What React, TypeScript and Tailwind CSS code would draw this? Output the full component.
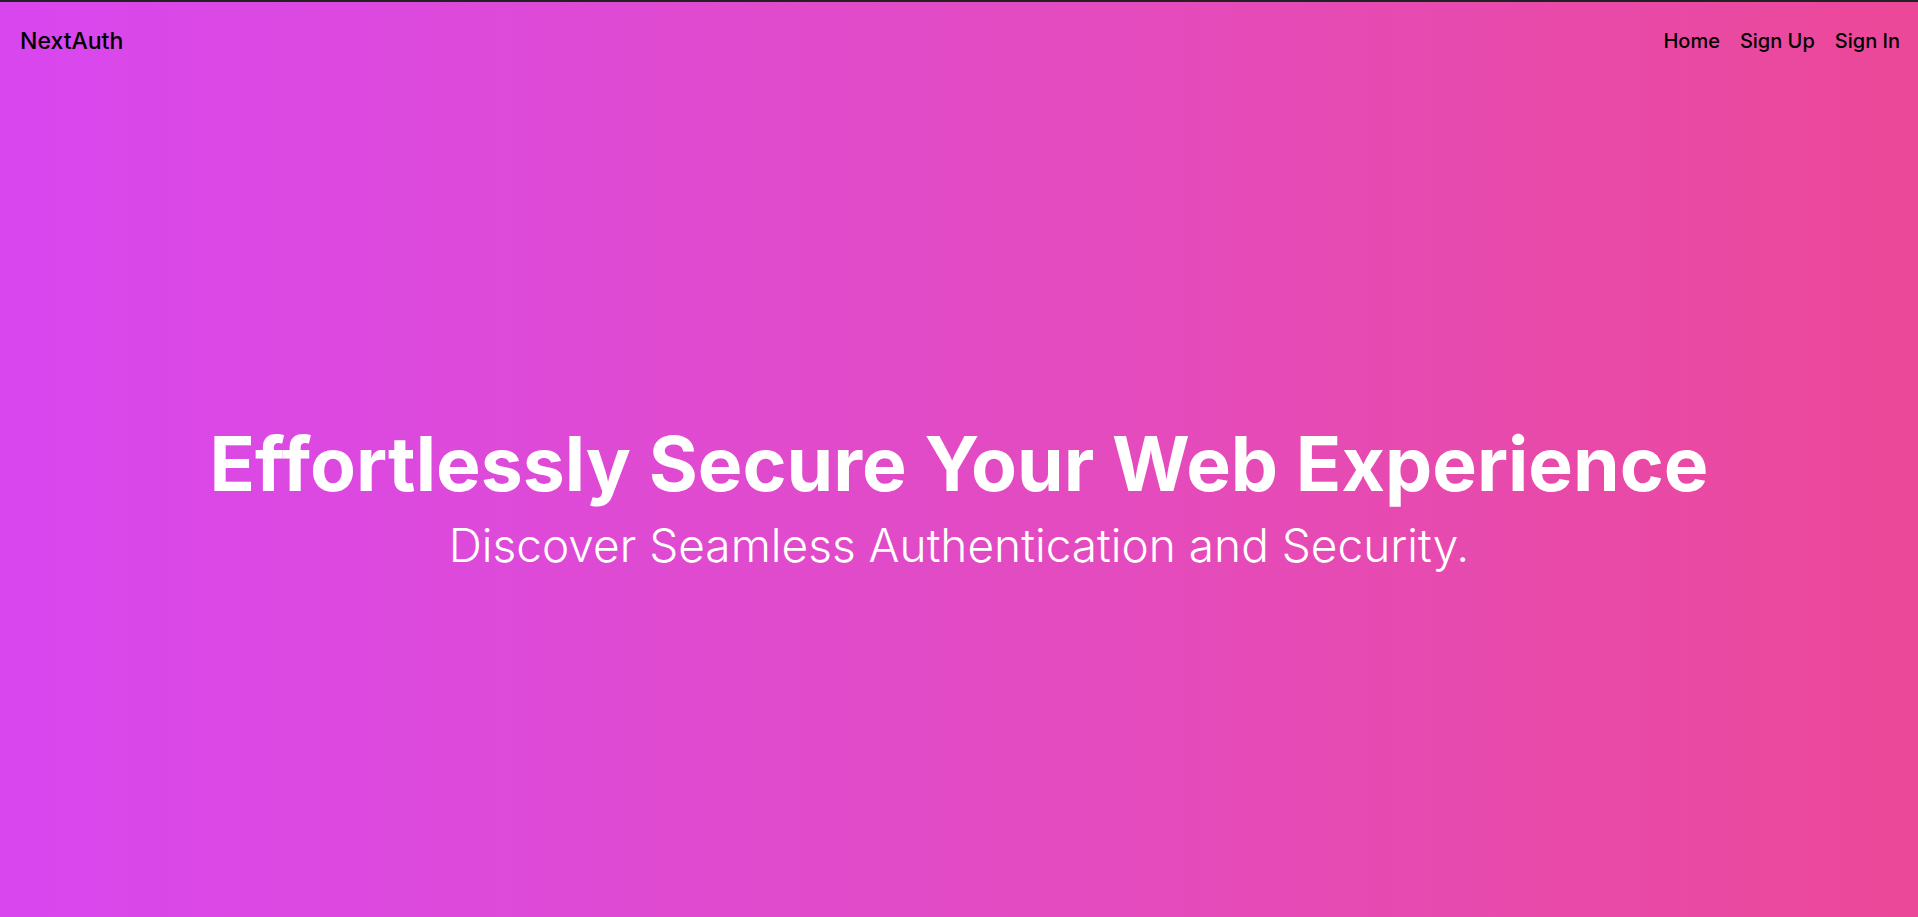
export default function App() {
  return (
    <div className="min-h-screen flex flex-col bg-gradient-to-r from-[#d946ef] to-[#ec4899] border-t-2 border-[#222] font-['Inter',sans-serif]">
      <nav className="flex items-center justify-between pl-5 pr-[18px] py-[23px]">
        <a className="text-[23px] leading-8 font-medium text-black">NextAuth</a>
        <div className="flex items-center gap-5 text-xl font-medium text-black">
          <a>Home</a>
          <a>Sign Up</a>
          <a>Sign In</a>
        </div>
      </nav>
      <main className="flex-1 flex flex-col items-center justify-center text-white text-center">
        <h1 className="text-[75px] font-bold leading-tight">Effortlessly Secure Your Web Experience</h1>
        <p className="text-[46px] font-light">Discover Seamless Authentication and Security.</p>
      </main>
    </div>
  );
}
